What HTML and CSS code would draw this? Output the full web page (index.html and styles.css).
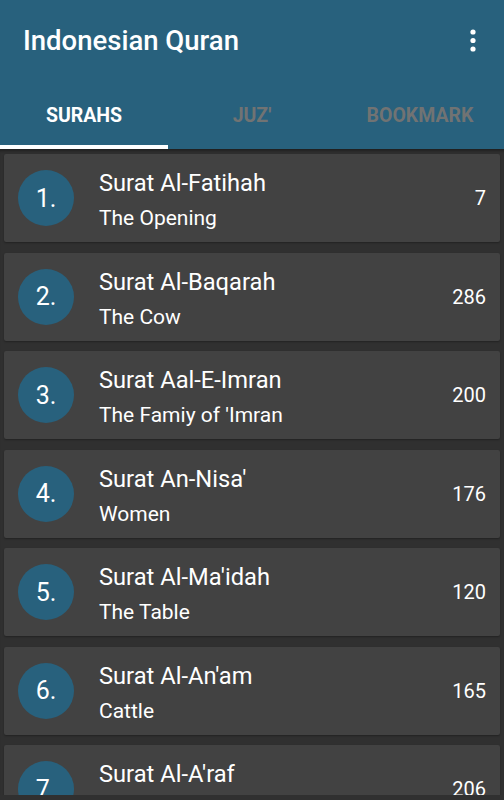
FILE: index.html
```html
<!DOCTYPE html>
<html>
<head>
<meta charset="utf-8">
<link rel="stylesheet" href="styles.css">
</head>
<body>
<div class="app">
  <header class="appbar">
    <div class="toolbar">
      <h1 class="title">Indonesian Quran</h1>
      <div class="menu" aria-label="More options">
        <svg width="8" height="24" viewBox="0 0 8 24"><circle cx="4" cy="4" r="2.6" fill="#fff"/><circle cx="4" cy="12.5" r="2.6" fill="#fff"/><circle cx="4" cy="21" r="2.6" fill="#fff"/></svg>
      </div>
    </div>
    <nav class="tabs">
      <div class="tab active">SURAHS</div>
      <div class="tab">JUZ'</div>
      <div class="tab">BOOKMARK</div>
    </nav>
  </header>
  <main class="list">
    <div class="card"><div class="num">1.</div><div class="info"><div class="name">Surat Al-Fatihah</div><div class="meaning">The Opening</div></div><div class="count">7</div></div>
    <div class="card"><div class="num">2.</div><div class="info"><div class="name">Surat Al-Baqarah</div><div class="meaning">The Cow</div></div><div class="count">286</div></div>
    <div class="card"><div class="num">3.</div><div class="info"><div class="name">Surat Aal-E-Imran</div><div class="meaning">The Famiy of 'Imran</div></div><div class="count">200</div></div>
    <div class="card"><div class="num">4.</div><div class="info"><div class="name">Surat An-Nisa'</div><div class="meaning">Women</div></div><div class="count">176</div></div>
    <div class="card"><div class="num">5.</div><div class="info"><div class="name">Surat Al-Ma'idah</div><div class="meaning">The Table</div></div><div class="count">120</div></div>
    <div class="card"><div class="num">6.</div><div class="info"><div class="name">Surat Al-An'am</div><div class="meaning">Cattle</div></div><div class="count">165</div></div>
    <div class="card"><div class="num">7.</div><div class="info"><div class="name">Surat Al-A'raf</div><div class="meaning">The Heights</div></div><div class="count">206</div></div>
  </main>
</div>
</body>
</html>
```
FILE: styles.css
```css
* { box-sizing: border-box; }
html, body { margin: 0; padding: 0; }
body {
  background: #303030;
  font-family: Roboto, "Liberation Sans", sans-serif;
  color: #fff;
  width: 504px;
  height: 800px;
  overflow: hidden;
}
.app { display: flex; flex-direction: column; height: 795px; overflow: hidden; }
.appbar { background: #28617d; flex: none; }
.toolbar {
  height: 85px;
  display: flex;
  align-items: center;
  justify-content: space-between;
  padding: 0 27px 0 23px;
}
.title { margin: 0; font-size: 27.5px; font-weight: 500; letter-spacing: 0; padding-bottom: 5px; }
.menu { display: flex; padding-bottom: 6px; }
.tabs { display: grid; grid-template-columns: repeat(3, 1fr); height: 64px; }
.tab {
  display: flex; align-items: center; justify-content: center;
  font-size: 19.5px; font-weight: 700; color: #717373;
  border-bottom: 4px solid transparent;
}
.tab.active { color: #fff; border-bottom-color: #fff; }
.list {
  flex: 1; overflow: hidden;
  padding: 5px 4px 0;
  display: flex; flex-direction: column; gap: 10.5px;
  box-shadow: inset 0 4px 3px -2px rgba(0,0,0,0.35);
}
.card {
  flex: none;
  height: 88px;
  background: #424242;
  border-radius: 2px;
  display: flex; align-items: center;
  padding: 0 14px 0 14px;
  box-shadow: 0 1px 2px rgba(0,0,0,0.3);
}
.num {
  width: 56px; height: 56px; border-radius: 50%;
  background: #28617d;
  display: flex; align-items: center; justify-content: center;
  font-size: 25px; flex: none;
}
.info { flex: 1; padding-left: 25px; display: flex; flex-direction: column; gap: 8px; padding-top: 3px; }
.name { font-size: 23.7px; line-height: 29px; }
.meaning { font-size: 21px; line-height: 24px; }
.count { font-size: 20px; }
```
